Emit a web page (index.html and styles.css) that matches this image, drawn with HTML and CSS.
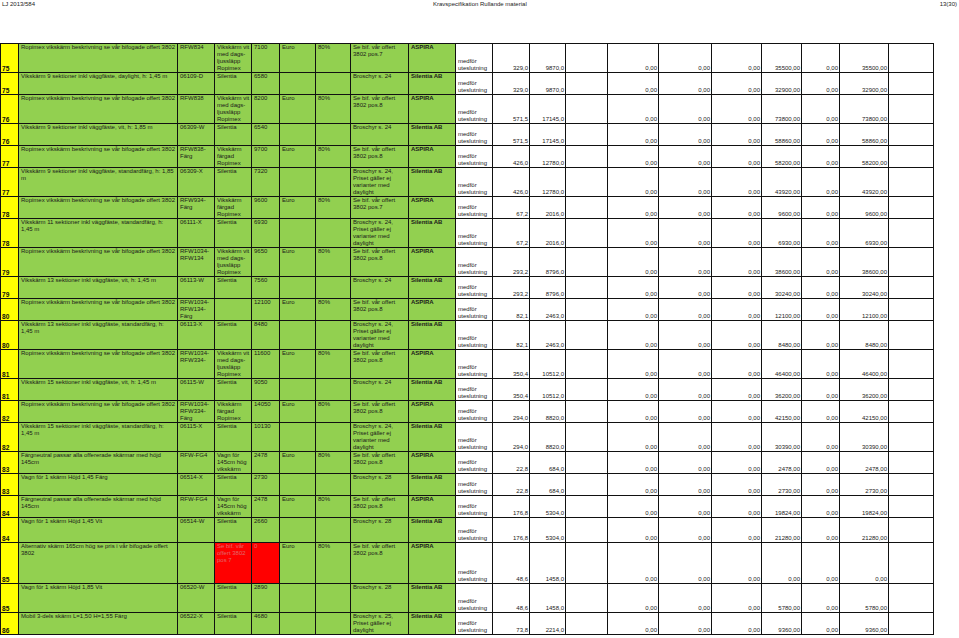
FILE: index.html
```html
<!DOCTYPE html>
<html lang="sv">
<head>
<meta charset="utf-8">
<title>Kravspecifikation Rullande material</title>
<link rel="stylesheet" href="styles.css">
</head>
<body>
<header class="top">
  <span>LJ 2013/584</span>
  <span>Kravspecifikation Rullande material</span>
  <span>13(30)</span>
</header>
<table class="spec">
  <colgroup>
    <col class="w18"><col class="w159"><col class="w37"><col class="w37"><col class="w28"><col class="w36"><col class="w35"><col class="w58"><col class="w47">
    <col class="w37"><col class="w37"><col class="w36"><col class="w42"><col class="w51"><col class="w53"><col class="w50"><col class="w40"><col class="w38"><col class="w49"><col class="w45">
  </colgroup>
  <tbody>
    <tr class="t4"><td>75</td><td>Ropimex vikskärm beskrivning se vår bifogade offert 3802</td><td>RFW834</td><td>Vikskärm vit<br>med dags-<br>ljussläpp<br>Ropimex</td><td>7100</td><td>Euro</td><td>80%</td><td>Se bif. vår offert<br>3802 pos.7</td><td>ASPIRA</td><td>medför<br>uteslutning</td><td>329,0</td><td>9870,0</td><td></td><td>0,00</td><td>0,00</td><td>0,00</td><td>35500,00</td><td>0,00</td><td>35500,00</td><td></td></tr>
    <tr class="t3"><td>75</td><td>Vikskärm 9 sektioner inkl väggfäste, daylight, h: 1,45 m</td><td>06109-D</td><td>Silentia</td><td>6580</td><td></td><td></td><td>Broschyr s. 24</td><td>Silentia AB</td><td>medför<br>uteslutning</td><td>329,0</td><td>9870,0</td><td></td><td>0,00</td><td>0,00</td><td>0,00</td><td>32900,00</td><td>0,00</td><td>32900,00</td><td></td></tr>
    <tr class="t4"><td>76</td><td>Ropimex vikskärm beskrivning se vår bifogade offert 3802</td><td>RFW838</td><td>Vikskärm vit<br>med dags-<br>ljussläpp<br>Ropimex</td><td>8200</td><td>Euro</td><td>80%</td><td>Se bif. vår offert<br>3802 pos.8</td><td>ASPIRA</td><td>medför<br>uteslutning</td><td>571,5</td><td>17145,0</td><td></td><td>0,00</td><td>0,00</td><td>0,00</td><td>73800,00</td><td>0,00</td><td>73800,00</td><td></td></tr>
    <tr class="t3"><td>76</td><td>Vikskärm 9 sektioner inkl väggfäste, vit, h: 1,85 m</td><td>06309-W</td><td>Silentia</td><td>6540</td><td></td><td></td><td>Broschyr s. 24</td><td>Silentia AB</td><td>medför<br>uteslutning</td><td>571,5</td><td>17145,0</td><td></td><td>0,00</td><td>0,00</td><td>0,00</td><td>58860,00</td><td>0,00</td><td>58860,00</td><td></td></tr>
    <tr class="t3"><td>77</td><td>Ropimex vikskärm beskrivning se vår bifogade offert 3802</td><td>RFW838-<br>Färg</td><td>Vikskärm<br>färgad<br>Ropimex</td><td>9700</td><td>Euro</td><td>80%</td><td>Se bif. vår offert<br>3802 pos.8</td><td>ASPIRA</td><td>medför<br>uteslutning</td><td>426,0</td><td>12780,0</td><td></td><td>0,00</td><td>0,00</td><td>0,00</td><td>58200,00</td><td>0,00</td><td>58200,00</td><td></td></tr>
    <tr class="t4"><td>77</td><td>Vikskärm 9 sektioner inkl väggfäste, standardfärg, h: 1,85<br>m</td><td>06309-X</td><td>Silentia</td><td>7320</td><td></td><td></td><td>Broschyr s. 24,<br>Priset gäller ej<br>varianter med<br>daylight</td><td>Silentia AB</td><td>medför<br>uteslutning</td><td>426,0</td><td>12780,0</td><td></td><td>0,00</td><td>0,00</td><td>0,00</td><td>43920,00</td><td>0,00</td><td>43920,00</td><td></td></tr>
    <tr class="t3"><td>78</td><td>Ropimex vikskärm beskrivning se vår bifogade offert 3802</td><td>RFW934-<br>Färg</td><td>Vikskärm<br>färgad<br>Ropimex</td><td>9600</td><td>Euro</td><td>80%</td><td>Se bif. vår offert<br>3802 pos.7</td><td>ASPIRA</td><td>medför<br>uteslutning</td><td>67,2</td><td>2016,0</td><td></td><td>0,00</td><td>0,00</td><td>0,00</td><td>9600,00</td><td>0,00</td><td>9600,00</td><td></td></tr>
    <tr class="t4"><td>78</td><td>Vikskärm 11 sektioner inkl väggfäste, standardfärg, h:<br>1,45 m</td><td>06111-X</td><td>Silentia</td><td>6930</td><td></td><td></td><td>Broschyr s. 24,<br>Priset gäller ej<br>varianter med<br>daylight</td><td>Silentia AB</td><td>medför<br>uteslutning</td><td>67,2</td><td>2016,0</td><td></td><td>0,00</td><td>0,00</td><td>0,00</td><td>6930,00</td><td>0,00</td><td>6930,00</td><td></td></tr>
    <tr class="t4"><td>79</td><td>Ropimex vikskärm beskrivning se vår bifogade offert 3802</td><td>RFW1034-<br>RFW134</td><td>Vikskärm vit<br>med dags-<br>ljussläpp<br>Ropimex</td><td>9650</td><td>Euro</td><td>80%</td><td>Se bif. vår offert<br>3802 pos.8</td><td>ASPIRA</td><td>medför<br>uteslutning</td><td>293,2</td><td>8796,0</td><td></td><td>0,00</td><td>0,00</td><td>0,00</td><td>38600,00</td><td>0,00</td><td>38600,00</td><td></td></tr>
    <tr class="t3"><td>79</td><td>Vikskärm 13 sektioner inkl väggfäste, vit, h: 1,45 m</td><td>06113-W</td><td>Silentia</td><td>7560</td><td></td><td></td><td>Broschyr s. 24</td><td>Silentia AB</td><td>medför<br>uteslutning</td><td>293,2</td><td>8796,0</td><td></td><td>0,00</td><td>0,00</td><td>0,00</td><td>30240,00</td><td>0,00</td><td>30240,00</td><td></td></tr>
    <tr class="t3"><td>80</td><td>Ropimex vikskärm beskrivning se vår bifogade offert 3802</td><td>RFW1034-<br>RFW134-<br>Färg</td><td></td><td>12100</td><td>Euro</td><td>80%</td><td>Se bif. vår offert<br>3802 pos.8</td><td>ASPIRA</td><td>medför<br>uteslutning</td><td>82,1</td><td>2463,0</td><td></td><td>0,00</td><td>0,00</td><td>0,00</td><td>12100,00</td><td>0,00</td><td>12100,00</td><td></td></tr>
    <tr class="t4"><td>80</td><td>Vikskärm 13 sektioner inkl väggfäste, standardfärg, h:<br>1,45 m</td><td>06113-X</td><td>Silentia</td><td>8480</td><td></td><td></td><td>Broschyr s. 24,<br>Priset gäller ej<br>varianter med<br>daylight</td><td>Silentia AB</td><td>medför<br>uteslutning</td><td>82,1</td><td>2463,0</td><td></td><td>0,00</td><td>0,00</td><td>0,00</td><td>8480,00</td><td>0,00</td><td>8480,00</td><td></td></tr>
    <tr class="t4"><td>81</td><td>Ropimex vikskärm beskrivning se vår bifogade offert 3802</td><td>RFW1034-<br>RFW334-</td><td>Vikskärm vit<br>med dags-<br>ljussläpp<br>Ropimex</td><td>11600</td><td>Euro</td><td>80%</td><td>Se bif. vår offert<br>3802 pos.8</td><td>ASPIRA</td><td>medför<br>uteslutning</td><td>350,4</td><td>10512,0</td><td></td><td>0,00</td><td>0,00</td><td>0,00</td><td>46400,00</td><td>0,00</td><td>46400,00</td><td></td></tr>
    <tr class="t3"><td>81</td><td>Vikskärm 15 sektioner inkl väggfäste, vit, h: 1,45 m</td><td>06115-W</td><td>Silentia</td><td>9050</td><td></td><td></td><td>Broschyr s. 24</td><td>Silentia AB</td><td>medför<br>uteslutning</td><td>350,4</td><td>10512,0</td><td></td><td>0,00</td><td>0,00</td><td>0,00</td><td>36200,00</td><td>0,00</td><td>36200,00</td><td></td></tr>
    <tr class="t3"><td>82</td><td>Ropimex vikskärm beskrivning se vår bifogade offert 3802</td><td>RFW1034-<br>RFW334-<br>Färg</td><td>Vikskärm<br>färgad<br>Ropimex</td><td>14050</td><td>Euro</td><td>80%</td><td>Se bif. vår offert<br>3802 pos.8</td><td>ASPIRA</td><td>medför<br>uteslutning</td><td>294,0</td><td>8820,0</td><td></td><td>0,00</td><td>0,00</td><td>0,00</td><td>42150,00</td><td>0,00</td><td>42150,00</td><td></td></tr>
    <tr class="t4"><td>82</td><td>Vikskärm 15 sektioner inkl väggfäste, standardfärg, h:<br>1,45 m</td><td>06115-X</td><td>Silentia</td><td>10130</td><td></td><td></td><td>Broschyr s. 24,<br>Priset gäller ej<br>varianter med<br>daylight</td><td>Silentia AB</td><td>medför<br>uteslutning</td><td>294,0</td><td>8820,0</td><td></td><td>0,00</td><td>0,00</td><td>0,00</td><td>30390,00</td><td>0,00</td><td>30390,00</td><td></td></tr>
    <tr class="t3"><td>83</td><td>Färgneutral passar alla offererade skärmar med höjd<br>145cm</td><td>RFW-FG4</td><td>Vagn för<br>145cm hög<br>vikskärm</td><td>2478</td><td>Euro</td><td>80%</td><td>Se bif. vår offert<br>3802 pos.8</td><td>ASPIRA</td><td>medför<br>uteslutning</td><td>22,8</td><td>684,0</td><td></td><td>0,00</td><td>0,00</td><td>0,00</td><td>2478,00</td><td>0,00</td><td>2478,00</td><td></td></tr>
    <tr class="t3"><td>83</td><td>Vagn för 1 skärm Höjd 1,45 Färg</td><td>06514-X</td><td>Silentia</td><td>2730</td><td></td><td></td><td>Broschyr s. 28</td><td>Silentia AB</td><td>medför<br>uteslutning</td><td>22,8</td><td>684,0</td><td></td><td>0,00</td><td>0,00</td><td>0,00</td><td>2730,00</td><td>0,00</td><td>2730,00</td><td></td></tr>
    <tr class="t3"><td>84</td><td>Färgneutral passar alla offererade skärmar med höjd<br>145cm</td><td>RFW-FG4</td><td>Vagn för<br>145cm hög<br>vikskärm</td><td>2478</td><td>Euro</td><td>80%</td><td>Se bif. vår offert<br>3802 pos.8</td><td>ASPIRA</td><td>medför<br>uteslutning</td><td>176,8</td><td>5304,0</td><td></td><td>0,00</td><td>0,00</td><td>0,00</td><td>19824,00</td><td>0,00</td><td>19824,00</td><td></td></tr>
    <tr class="t25"><td>84</td><td>Vagn för 1 skärm Höjd 1,45 Vit</td><td>06514-W</td><td>Silentia</td><td>2660</td><td></td><td></td><td>Broschyr s. 28</td><td>Silentia AB</td><td>medför<br>uteslutning</td><td>176,8</td><td>5304,0</td><td></td><td>0,00</td><td>0,00</td><td>0,00</td><td>21280,00</td><td>0,00</td><td>21280,00</td><td></td></tr>
    <tr class="t41"><td>85</td><td>Alternativ skärm 165cm hög se pris i vår bifogade offert<br>3802</td><td></td><td class="red">Se bif. vår<br>offert 3802<br>pos 7</td><td class="red">0</td><td>Euro</td><td>80%</td><td>Se bif. vår offert<br>3802 pos.8</td><td>ASPIRA</td><td>medför<br>uteslutning</td><td>48,6</td><td>1458,0</td><td></td><td>0,00</td><td>0,00</td><td>0,00</td><td>0,00</td><td>0,00</td><td>0,00</td><td></td></tr>
    <tr class="t4"><td>85</td><td>Vagn för 1 skärm Höjd 1,85 Vit</td><td>06520-W</td><td>Silentia</td><td>2890</td><td></td><td></td><td>Broschyr s. 28</td><td>Silentia AB</td><td>medför<br>uteslutning</td><td>48,6</td><td>1458,0</td><td></td><td>0,00</td><td>0,00</td><td>0,00</td><td>5780,00</td><td>0,00</td><td>5780,00</td><td></td></tr>
    <tr class="t3"><td>86</td><td>Mobil 3-dels skärm L=1,50 H=1,55 Färg</td><td>06522-X</td><td>Silentia</td><td>4680</td><td></td><td></td><td>Broschyr s. 25,<br>Priset gäller ej<br>daylight</td><td>Silentia AB</td><td>medför<br>uteslutning</td><td>73,8</td><td>2214,0</td><td></td><td>0,00</td><td>0,00</td><td>0,00</td><td>9360,00</td><td>0,00</td><td>9360,00</td><td></td></tr>
  </tbody>
</table>
</body>
</html>
```
FILE: styles.css
```css
html, body {
  margin: 0;
  padding: 0;
  background: #ffffff;
}
body {
  font-family: "Liberation Sans", Arial, sans-serif;
  font-size: 6px;
  color: #1a1a1a;
  width: 959px;
  height: 638px;
  overflow: hidden;
}
.top {
  display: grid;
  grid-template-columns: 431px 1fr auto;
  box-sizing: border-box;
  height: 43px;
  padding: 1px 2px 0 2px;
  line-height: 7px;
  color: #222;
}
.spec {
  border-collapse: collapse;
  table-layout: fixed;
  width: 933px;
}
.w18 { width: 18px; }
.w28 { width: 28px; }
.w35 { width: 35px; }
.w36 { width: 36px; }
.w37 { width: 37px; }
.w38 { width: 38px; }
.w40 { width: 40px; }
.w42 { width: 42px; }
.w45 { width: 45px; }
.w47 { width: 47px; }
.w49 { width: 49px; }
.w50 { width: 50px; }
.w51 { width: 51px; }
.w53 { width: 53px; }
.w58 { width: 58px; }
.w159 { width: 159px; }

.t3 { height: 22px; }
.t4 { height: 28.7px; }
.t25 { height: 25.3px; }
.t41 { height: 41px; }

.spec td {
  border: 1px solid #111;
  padding: 0 1px 0 2px;
  line-height: 7px;
  vertical-align: top;
  overflow: hidden;
  background: #92d050;
  white-space: nowrap;
}
.spec td:first-child {
  background: #ffff00;
  font-weight: bold;
  font-size: 6.6px;
  vertical-align: bottom;
  padding: 0 0 0 1px;
  color: #111;
}
.spec td:nth-child(9) {
  font-weight: bold;
}
.spec td:nth-child(n+10) {
  background: #ffffff;
  vertical-align: bottom;
  text-align: right;
  padding: 0 1px 0 1px;
}
.spec td:nth-child(10) {
  text-align: left;
  padding-left: 2px;
}
.spec td.red {
  background: #ff0000;
  color: #e26b6b;
}
```
